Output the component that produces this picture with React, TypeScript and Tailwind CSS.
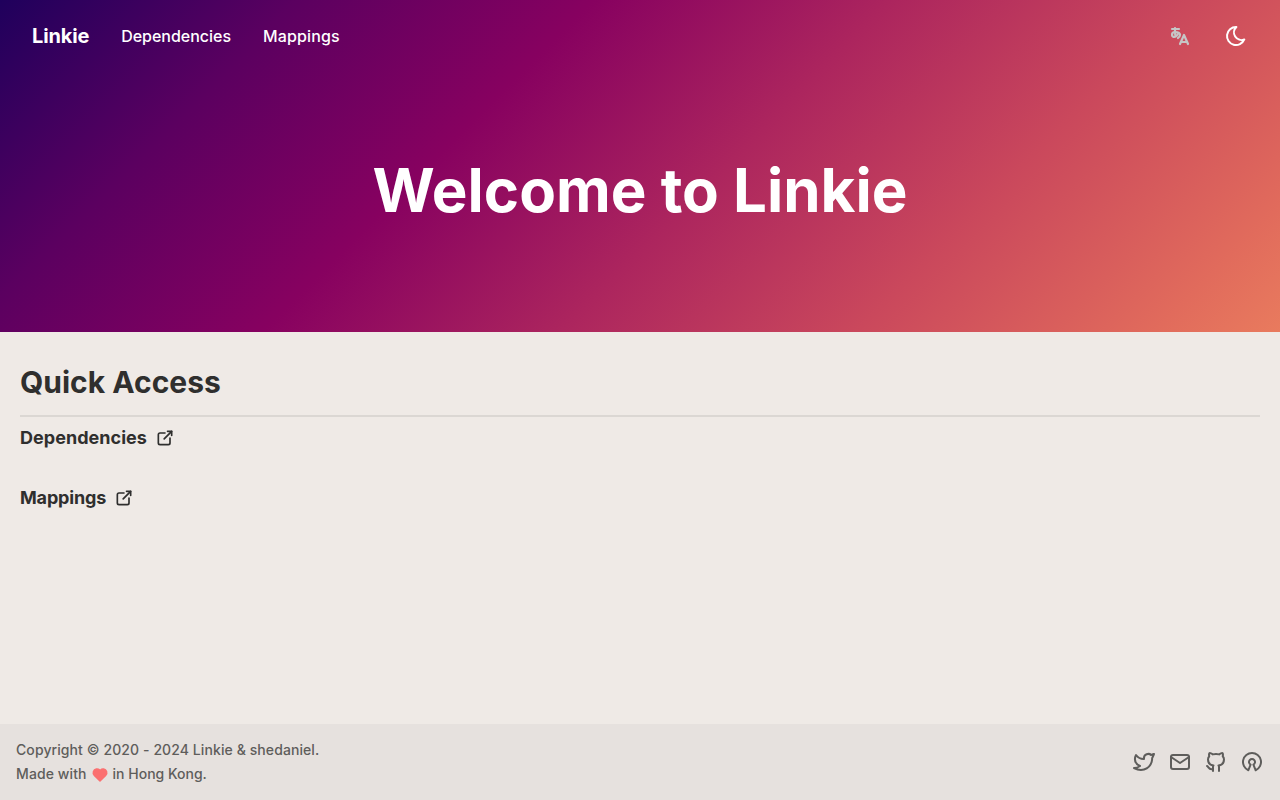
import React from 'react';
import {
  TbBrandGithub,
  TbBrandOpenSource,
  TbBrandTwitter,
  TbExternalLink,
  TbHeartFilled,
  TbLanguageHiragana,
  TbMail,
  TbMoon,
} from 'react-icons/tb';

const quickLinks = [
  { label: 'Dependencies', href: '#dependencies', navTracking: 'tracking-[-0.02px]', tracking: 'tracking-[0.03px]' },
  { label: 'Mappings', href: '#mappings', navTracking: 'tracking-[0.13px]', tracking: 'tracking-[-0.16px]' },
];

const socials = [
  { label: 'Twitter', icon: TbBrandTwitter },
  { label: 'Email', icon: TbMail },
  { label: 'GitHub', icon: TbBrandGithub },
  { label: 'Open source', icon: TbBrandOpenSource },
];

const Navbar: React.FC = () => (
  <nav className="flex h-[72px] items-center justify-between px-8 text-white">
    <div className="flex items-center gap-8">
      <a href="#" className="text-xl font-bold tracking-[-0.15px]">Linkie</a>
      {quickLinks.map((link) => (
        <a key={link.label} href={link.href} className={`font-medium ${link.navTracking}`}>{link.label}</a>
      ))}
    </div>
    <div className="flex items-center gap-8">
      <button aria-label="Language" className="text-[#c6c6c6]">
        <TbLanguageHiragana className="size-6 stroke-[2.2]" />
      </button>
      <button aria-label="Toggle theme">
        <TbMoon className="size-6" />
      </button>
    </div>
  </nav>
);

const Footer: React.FC = () => (
  <footer className="flex h-[76px] items-center justify-between bg-[#e6e1de] px-4 text-sm font-medium text-[#5e5d5b]">
    <div className="leading-6">
      <p className="tracking-[0.09px]">Copyright © 2020 - 2024 Linkie &amp; shedaniel.</p>
      <p className="flex items-center">
        <span className="tracking-[0.1px]">Made with</span>
        <TbHeartFilled className="mx-1 mt-0.5 size-[18px] text-[#fb7070]" />
        in Hong Kong.
      </p>
    </div>
    <div className="flex gap-3">
      {socials.map(({ label, icon: Icon }) => (
        <a key={label} href="#" aria-label={label}>
          <Icon className="size-6" />
        </a>
      ))}
    </div>
  </footer>
);

const App: React.FC = () => {
  return (
    <div className="flex min-h-screen flex-col bg-[#efeae6] font-['Inter',sans-serif] text-[#2f2f2e]">
      {/* Hero */}
      <header className="h-[332px] bg-[linear-gradient(135deg,#1f005c,#5b0060,#870160,#ac255e,#ca485c,#e16b5c,#f39060,#ffb56b)] bg-[length:1280px_800px] bg-no-repeat">
        <Navbar />
        <h1 className="mt-[88px] text-center text-6xl font-bold text-white">Welcome to Linkie</h1>
      </header>

      {/* Quick access */}
      <main className="grow px-5 pt-8">
        <h2 className="border-b-2 border-[#dbd7d3] pb-[15px] text-3xl leading-9 font-bold">Quick Access</h2>
        <div className="flex flex-col gap-8 pt-[7px]">
          {quickLinks.map((link) => (
            <a key={link.label} href={link.href} className={`flex items-center gap-2 text-lg font-bold ${link.tracking}`}>
              {link.label}
              <TbExternalLink className="size-5" />
            </a>
          ))}
        </div>
      </main>

      <Footer />
    </div>
  );
};

export default App;
